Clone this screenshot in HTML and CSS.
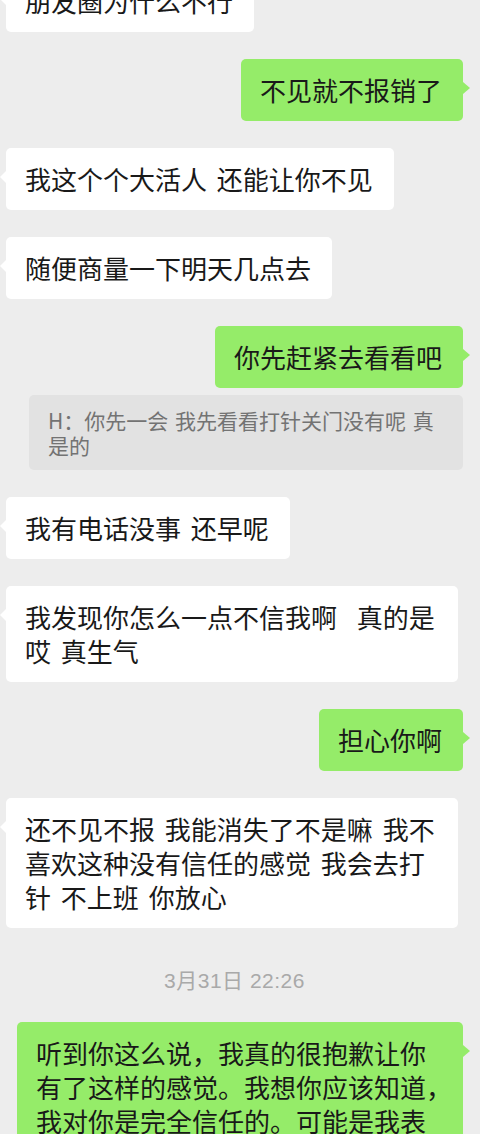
FILE: index.html
```html
<!DOCTYPE html>
<html lang="zh-CN">
<head>
    <meta charset="UTF-8">
    <meta name="viewport" content="width=device-width, initial-scale=1.0">
    <title>聊天</title>
    <link rel="stylesheet" href="styles.css">
</head>
<body>
    <div class="chat">
        <div class="msg left">
            <div class="bubble">朋友圈为什么不行</div>
        </div>
        <div class="msg right">
            <div class="bubble">不见就不报销了</div>
        </div>
        <div class="msg left">
            <div class="bubble">我这个个大活人 还能让你不见</div>
        </div>
        <div class="msg left">
            <div class="bubble">随便商量一下明天几点去</div>
        </div>
        <div class="msg right">
            <div class="bubble">你先赶紧去看看吧</div>
            <!-- 引用的消息 -->
            <div class="quote">H：你先一会 我先看看打针关门没有呢 真是的</div>
        </div>
        <div class="msg left">
            <div class="bubble">我有电话没事 还早呢</div>
        </div>
        <div class="msg left">
            <div class="bubble">我发现你怎么一点不信我啊&nbsp; 真的是 哎 真生气</div>
        </div>
        <div class="msg right">
            <div class="bubble">担心你啊</div>
        </div>
        <div class="msg left">
            <div class="bubble">还不见不报 我能消失了不是嘛 我不喜欢这种没有信任的感觉 我会去打针 不上班 你放心</div>
        </div>

        <div class="time">3月31日 22:26</div>

        <div class="msg right">
            <!-- 行尾的逗号用半角宽度，和手机上一样挤进这一行 -->
            <div class="bubble">听到你这么说，我真的很抱歉让你有了这样的感觉。我想你应该知道<span class="half">，</span>我对你是完全信任的。可能是我表达得不够好，让你误会了。我只是担心你，希望你好好的。</div>
        </div>
    </div>
</body>
</html>
```

FILE: styles.css
```css
body {
    margin: 0;
    background-color: #ededed;
    font-family: "Noto Sans CJK SC", "Noto Sans", sans-serif;
    overflow: hidden;
}

.chat {
    display: flex;
    flex-direction: column;
    gap: 27px;
    margin-top: -30px;
    padding: 0 17px 0 6px;
}

.msg {
    display: flex;
    flex-direction: column;
    gap: 7px;
}

.msg.left {
    align-items: flex-start;
}

.msg.right {
    align-items: flex-end;
}

.bubble {
    position: relative;
    box-sizing: border-box;
    max-width: 452px;
    padding: 14px 21px 14px 19px;
    border-radius: 5px;
    background-color: #fff;
    color: #191919;
    font-size: 26px;
    line-height: 34px;
    word-spacing: 4px;
}

.right .bubble {
    max-width: 446px;
    background-color: #95ec69;
}

.half {
    font-feature-settings: "halt";
}

/* 气泡的小尖角 */
.bubble::before {
    content: "";
    position: absolute;
    top: 23px;
    width: 0;
    height: 0;
    border-top: 6px solid transparent;
    border-bottom: 6px solid transparent;
}

.left .bubble::before {
    left: -6px;
    border-right: 6px solid #fff;
}

.right .bubble::before {
    right: -7px;
    border-left: 7px solid #95ec69;
}

.quote {
    box-sizing: border-box;
    max-width: 434px;
    padding: 13px 19px 12px;
    border-radius: 5px;
    background-color: #e2e2e2;
    color: #737373;
    font-size: 21px;
    line-height: 25px;
    word-spacing: 2px;
}

.time {
    margin: 14px 0 2px;
    text-align: center;
    color: #a9a9a9;
    font-family: "Liberation Sans", "Noto Sans CJK SC", sans-serif;
    font-size: 21px;
    line-height: 24px;
    letter-spacing: 0.5px;
}
```
